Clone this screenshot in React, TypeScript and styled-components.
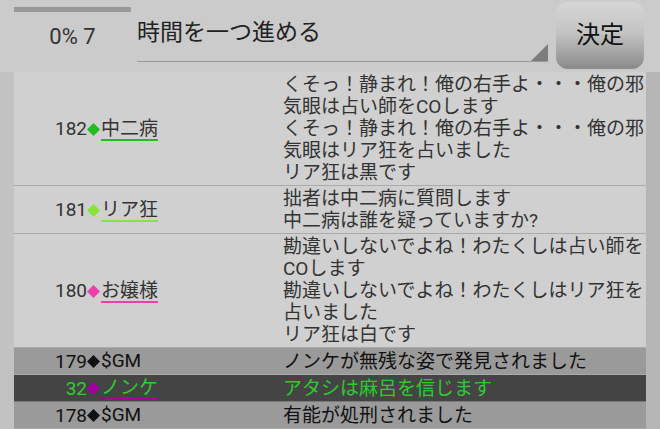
import styled, { createGlobalStyle } from "styled-components";

const GlobalStyle = createGlobalStyle`
  html, body {
    margin: 0;
    padding: 0;
    background: #cbcbcb;
  }
  body {
    font-family: Roboto, "Noto Sans CJK JP", sans-serif;
  }
`;

const Screen = styled.div`
  width: 660px;
  height: 429px;
  overflow: hidden;
  display: flex;
  flex-direction: column;
  background: #cbcbcb;
`;

const Header = styled.div`
  height: 72px;
  display: flex;
  align-items: flex-start;
  padding-left: 14px;
  box-sizing: border-box;
`;

const StatusBox = styled.div`
  width: 117px;
  display: flex;
  flex-direction: column;
  align-items: center;
`;

const ProgressBar = styled.div`
  width: 100%;
  height: 5px;
  margin-top: 7px;
  background: #999999;
`;

const StatusLabel = styled.div`
  margin-top: 13px;
  font-size: 22px;
  line-height: 24px;
  color: #333333;
`;

const InputField = styled.div`
  position: relative;
  width: 411px;
  height: 62px;
  margin-left: 6px;
  box-sizing: border-box;
  border-bottom: 1.5px solid #9c9c9c;
  font-size: 23px;
  line-height: 30px;
  padding-top: 18px;
  color: #222222;
`;

const Corner = styled.svg`
  position: absolute;
  right: 0;
  bottom: 0;
`;

const SubmitButton = styled.button`
  width: 88px;
  height: 67px;
  margin: 2px 0 0 8px;
  border: none;
  border-radius: 12px;
  background: linear-gradient(to bottom, #d6d6d6 0%, #c4c4c4 45%, #8a8a8a 100%);
  font-family: Roboto, "Noto Sans CJK JP", sans-serif;
  font-size: 24px;
  line-height: 28px;
  color: #111111;
  padding: 0 0 2px;
`;

const Body = styled.div`
  flex: 1;
  display: flex;
`;

const Side = styled.div<{ $shade: string }>`
  width: 14px;
  background: ${(p) => p.$shade};
`;

const Table = styled.div`
  flex: 1;
  display: flex;
  flex-direction: column;
`;

type Tone = "light" | "gray" | "dark";

const rowBg: Record<Tone, string> = {
  light: "#d0d0d0",
  gray: "#9a9a9a",
  dark: "#444444",
};

const Row = styled.div<{ $tone: Tone }>`
  display: grid;
  grid-template-columns: 73px 13px 183px 1fr;
  align-items: center;
  padding: 2px 0 1px;
  background: ${(p) => rowBg[p.$tone]};
  border-bottom: 1px solid ${(p) => (p.$tone === "dark" ? "#7a7a7a" : "#aaaaaa")};
  font-size: 19px;
  line-height: 22px;
  color: ${(p) => (p.$tone === "dark" ? "#2ecc2e" : p.$tone === "gray" ? "#111111" : "#333333")};
`;

const Num = styled.span`
  text-align: right;
`;

const Mark = styled.svg`
  display: block;
`;

const NameCell = styled.div`
  padding-left: 1px;
`;

const Name = styled.span<{ $line?: string }>`
  display: inline-block;
  line-height: 20px;
  border-bottom: 2px solid ${(p) => p.$line ?? "transparent"};
`;

const Message = styled.div`
  white-space: pre-wrap;
  line-break: strict;
`;

type Entry = {
  no: string;
  mark: string;
  name: string;
  line?: string;
  text: string;
  tone: Tone;
};

const entries: Entry[] = [
  {
    no: "182",
    mark: "#22bb22",
    name: "中二病",
    line: "#22bb22",
    text: "くそっ！静まれ！俺の右手よ・・・俺の邪気眼は占い師をCOします\nくそっ！静まれ！俺の右手よ・・・俺の邪気眼はリア狂を占いました\nリア狂は黒です",
    tone: "light",
  },
  {
    no: "181",
    mark: "#88e33a",
    name: "リア狂",
    line: "#88e33a",
    text: "拙者は中二病に質問します\n中二病は誰を疑っていますか?",
    tone: "light",
  },
  {
    no: "180",
    mark: "#f03ea8",
    name: "お嬢様",
    line: "#f03ea8",
    text: "勘違いしないでよね！わたくしは占い師をCOします\n勘違いしないでよね！わたくしはリア狂を占いました\nリア狂は白です",
    tone: "light",
  },
  {
    no: "179",
    mark: "#111111",
    name: "$GM",
    text: "ノンケが無残な姿で発見されました",
    tone: "gray",
  },
  {
    no: "32",
    mark: "#a000a0",
    name: "ノンケ",
    line: "#a000a0",
    text: "アタシは麻呂を信じます",
    tone: "dark",
  },
  {
    no: "178",
    mark: "#111111",
    name: "$GM",
    text: "有能が処刑されました",
    tone: "gray",
  },
];

const App = () => {
  return (
    <Screen>
      <GlobalStyle />
      <Header>
        <StatusBox>
          <ProgressBar />
          <StatusLabel>0% 7</StatusLabel>
        </StatusBox>
        <InputField>
          時間を一つ進める
          <Corner width="17" height="17" viewBox="0 0 17 17">
            <polygon points="17,0 17,17 0,17" fill="#7c7c7c" />
          </Corner>
        </InputField>
        <SubmitButton>決定</SubmitButton>
      </Header>
      <Body>
        <Side $shade="#c2c2c2" />
        <Table>
          {entries.map((e, i) => (
            <Row key={`log-row-${i}`} $tone={e.tone}>
              <Num>{e.no}</Num>
              <Mark width="13" height="13" viewBox="0 0 12 12">
                <polygon points="6,0 12,6 6,12 0,6" fill={e.mark} />
              </Mark>
              <NameCell>
                <Name $line={e.line}>{e.name}</Name>
              </NameCell>
              <Message>{e.text}</Message>
            </Row>
          ))}
        </Table>
        <Side $shade="#b6b6b6" />
      </Body>
    </Screen>
  );
};

export default App;
